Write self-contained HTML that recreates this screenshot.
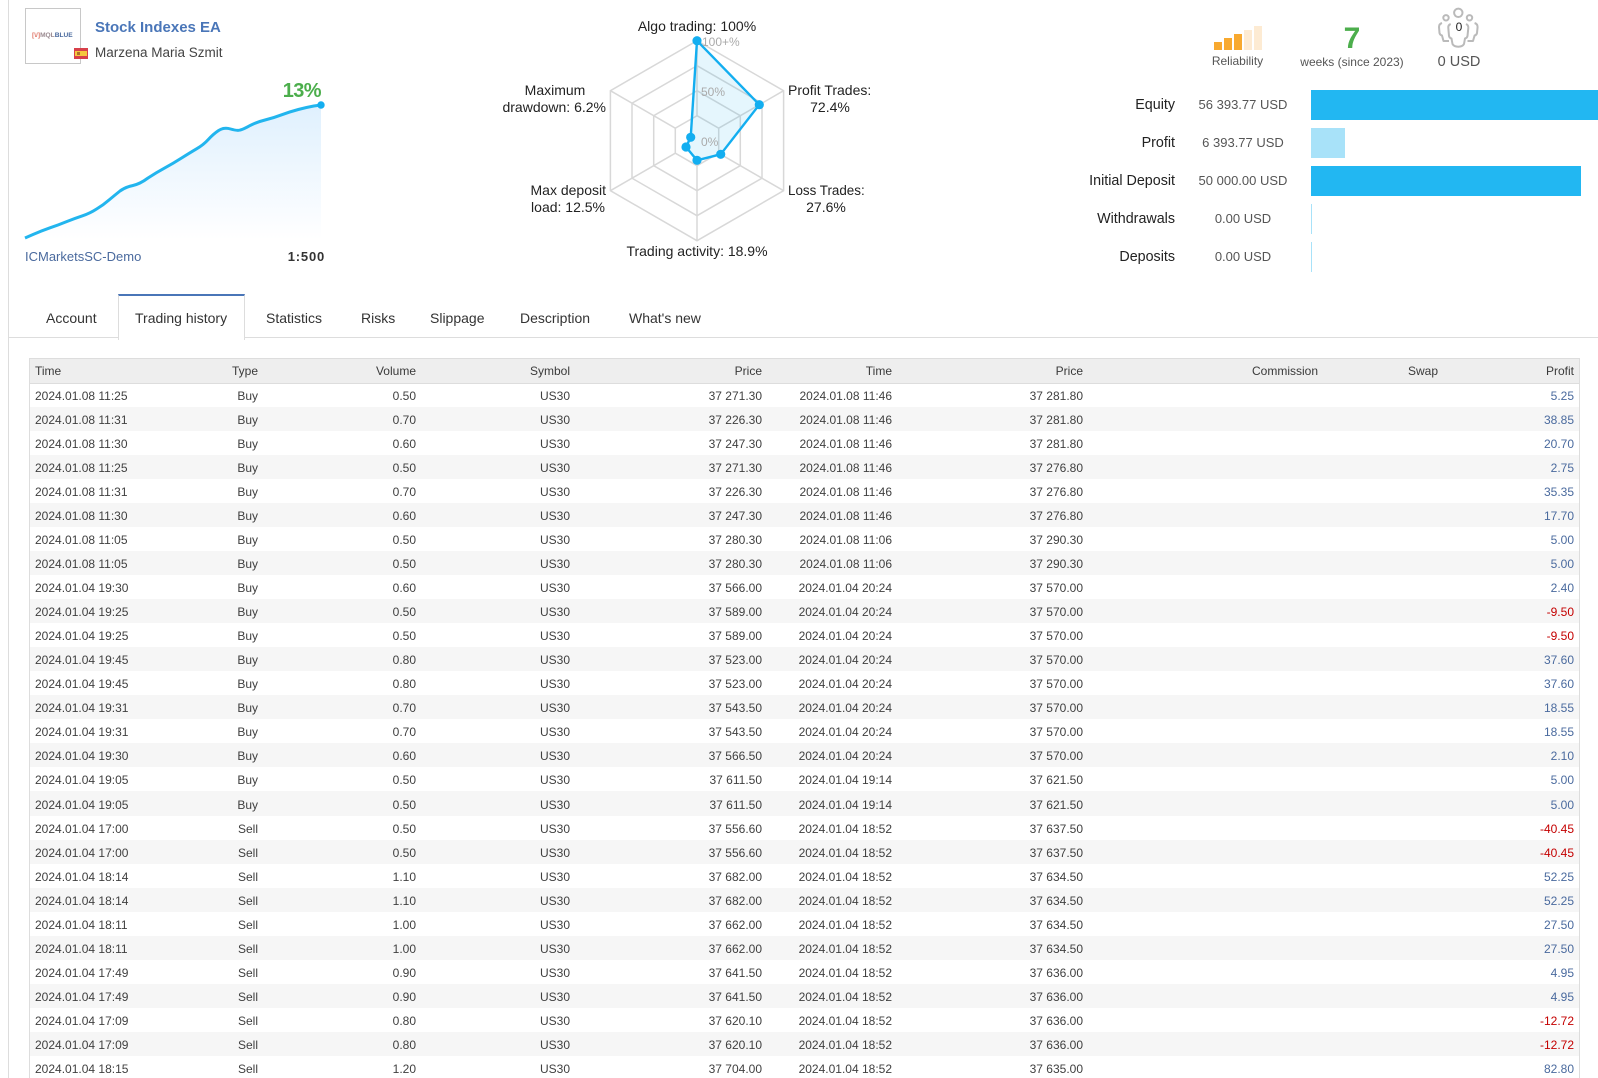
<!DOCTYPE html>
<html><head><meta charset="utf-8"><title>Stock Indexes EA</title>
<style>
html,body{margin:0;padding:0;background:#fff;width:1598px;height:1078px;overflow:hidden;font-family:"Liberation Sans",Arial,sans-serif;color:#444}
#left{position:absolute;left:8px;top:0;width:1px;height:1078px;background:#ddd}
svg{position:absolute;left:0;top:0}
.tabline{position:absolute;left:9px;right:0;top:337px;height:1px;background:#ddd}
.tab{position:absolute;top:297px;height:41px;line-height:42px;font-size:14px;color:#333;white-space:nowrap}
#active{position:absolute;left:118px;top:294px;width:125px;height:44px;background:#fff;border:1px solid #ddd;border-top:2px solid #4a76b8;border-bottom:0}
#tw{position:absolute;left:29px;top:358px;width:1551px;height:720px;overflow:hidden;border:1px solid #ddd;border-width:1px 1px 0 1px;box-sizing:border-box}
table{border-collapse:collapse;table-layout:fixed;width:1549px;font-size:12px;color:#3f3f3f}
th{background:#eee;height:24px;padding:0 5px;font-weight:normal;text-align:right;border-bottom:1px solid #ddd;color:#3a3a3a;box-sizing:border-box}
td{height:24px;padding:2px 5px 0;text-align:right;white-space:nowrap;box-sizing:border-box}
th:first-child,td:first-child{text-align:left}
tr:nth-child(even) td{background:#f6f6f6}
td:last-child{color:#4a6a9e}
td.n{color:#c40000}
tr.x td{height:25px}
</style></head><body>
<div id="left"></div>
<div class="tabline"></div>
<div id="active"></div>
<div class="tab" style="left:46px">Account</div>
<div class="tab" style="left:135px">Trading history</div>
<div class="tab" style="left:266px">Statistics</div>
<div class="tab" style="left:361px">Risks</div>
<div class="tab" style="left:430px">Slippage</div>
<div class="tab" style="left:520px">Description</div>
<div class="tab" style="left:629px">What's new</div>

<svg width="1598" height="290" viewBox="0 0 1598 290" font-family="Liberation Sans, Arial, sans-serif">
<defs><linearGradient id="g" x1="0" y1="0" x2="0" y2="1"><stop offset="0" stop-color="#dff0fe"/><stop offset="1" stop-color="#fff"/></linearGradient></defs>
<!-- logo -->
<rect x="25.5" y="8.5" width="55" height="55" fill="#fff" stroke="#c8c8c8"/>
<text x="32" y="37" font-size="6.6" font-weight="bold" fill="#e0786a">[\/]<tspan fill="#9a8a90">MQL</tspan><tspan fill="#4a6a9e">BLUE</tspan></text>
<rect x="74" y="48" width="14" height="11" fill="#d8404a"/><rect x="75" y="51" width="12" height="5" fill="#f6c83c"/><rect x="77" y="52" width="3" height="3" fill="#b0702a"/>
<text x="95" y="32" font-size="15" font-weight="bold" fill="#4a76b8">Stock Indexes EA</text>
<text x="95" y="57" font-size="13.5" fill="#444">Marzena Maria Szmit</text>
<!-- chart -->
<path d="M25 238L33 234.5Q41.7 230.7 50 227.8Q58.3 225 66.6 221.6Q75 218.3 82.5 215.8Q90 213.3 96.6 209Q103.3 205 109 200Q115 195 120 191Q125 187.3 132.5 185.6Q140 184 148 178Q156.7 172.3 165 167.8Q173.3 163.3 181.6 158Q190 152.7 196.6 148.8Q203.3 145 208.3 139.5Q213.3 134 218.6 130.5Q224 127 230.6 129Q237.3 131 240.3 130Q243.3 129.3 250 125.6Q256.7 122 265 120Q273.3 118 281.6 114.8Q290 111.7 298.3 109.5Q306.7 107.3 313.8 106L321 105L321 240L25 240Z" fill="url(#g)"/>
<path d="M25 238L33 234.5Q41.7 230.7 50 227.8Q58.3 225 66.6 221.6Q75 218.3 82.5 215.8Q90 213.3 96.6 209Q103.3 205 109 200Q115 195 120 191Q125 187.3 132.5 185.6Q140 184 148 178Q156.7 172.3 165 167.8Q173.3 163.3 181.6 158Q190 152.7 196.6 148.8Q203.3 145 208.3 139.5Q213.3 134 218.6 130.5Q224 127 230.6 129Q237.3 131 240.3 130Q243.3 129.3 250 125.6Q256.7 122 265 120Q273.3 118 281.6 114.8Q290 111.7 298.3 109.5Q306.7 107.3 313.8 106L321 105" fill="none" stroke="#22b5ee" stroke-width="3"/>
<circle cx="321" cy="105" r="3.7" fill="#13aef0"/>
<text x="321" y="97" text-anchor="end" font-size="20" font-weight="bold" letter-spacing="-.6" fill="#4cae4c">13%</text>
<text x="25" y="261" font-size="13" fill="#4a6a9e">ICMarketsSC-Demo</text>
<text x="325" y="261" text-anchor="end" font-size="13" font-weight="bold" letter-spacing=".8" fill="#333">1:500</text>
<!-- radar -->
<g fill="none" stroke="#d8d8d8" stroke-width="1.5">
<path d="M697 40.7L783.6 90.7V190.7L697 240.7L610.4 190.7V90.7Z"/>
<path d="M697 65.7L762 103.2V178.2L697 215.7L632 178.2V103.2Z"/>
<path d="M697 90.7L740.3 115.7V165.7L697 190.7L653.7 165.7V115.7Z"/>
<path d="M697 115.7L718.7 128.2V153.2L697 165.7L675.3 153.2V128.2Z"/>
<path d="M697 40.7V115.7M783.6 90.7L718.7 128.2M783.6 190.7L718.7 153.2M697 240.7V165.7M610.4 190.7L675.3 153.2M610.4 90.7L675.3 128.2"/>
</g>
<path d="M697 40.7L759.3 104.7L720.7 154.3L697 160.3L686 147L690.7 137.3Z" fill="#13aef0" fill-opacity=".11" stroke="#13aef0" stroke-width="2.4" stroke-linejoin="round"/>
<g fill="#13aef0"><circle cx="697" cy="40.7" r="4.6"/><circle cx="759.3" cy="104.7" r="4.6"/><circle cx="720.7" cy="154.3" r="4.6"/><circle cx="697" cy="160.3" r="4.6"/><circle cx="686" cy="147" r="4.6"/><circle cx="690.7" cy="137.3" r="4.6"/></g>
<g font-size="12" fill="#aaa"><text x="702" y="46">100+%</text><text x="701" y="96">50%</text><text x="701" y="146">0%</text></g>
<g font-size="14" fill="#222">
<text x="697" y="31" text-anchor="middle">Algo trading: 100%</text>
<text x="555" y="95" text-anchor="middle">Maximum</text>
<text x="606" y="112" text-anchor="end">drawdown: 6.2%</text>
<text x="788" y="95">Profit Trades:</text>
<text x="830" y="112" text-anchor="middle">72.4%</text>
<text x="606" y="195" text-anchor="end">Max deposit</text>
<text x="605" y="212" text-anchor="end">load: 12.5%</text>
<text x="788" y="195" font-size="13.4">Loss Trades:</text>
<text x="826" y="212" text-anchor="middle">27.6%</text>
<text x="697" y="256" text-anchor="middle">Trading activity: 18.9%</text>
</g>
<!-- reliability -->
<rect x="1214" y="42" width="8" height="8" fill="#f8a92f"/><rect x="1224" y="38" width="8" height="12" fill="#f8a92f"/><rect x="1234" y="34" width="8" height="16" fill="#f8a92f"/><rect x="1244" y="30" width="8" height="20" fill="#fdebd3"/><rect x="1254" y="26" width="8" height="24" fill="#fdebd3"/>
<text x="1237.5" y="65" text-anchor="middle" font-size="12" fill="#555">Reliability</text>
<text x="1352" y="48" text-anchor="middle" font-size="30" font-weight="bold" fill="#4cae4c">7</text>
<text x="1352" y="66" text-anchor="middle" font-size="12" fill="#555">weeks (since 2023)</text>
<!-- people -->
<g fill="none" stroke="#bababa" stroke-width="2" stroke-linejoin="round">
<circle cx="1458.3" cy="12.8" r="4.2"/><circle cx="1446" cy="17.8" r="2.7"/><circle cx="1469.5" cy="17.8" r="2.7"/>
<path d="M1450.7 24Q1448 25 1448.3 28L1449 36Q1449.5 38 1451.5 38.5L1452.5 44Q1454 46.7 1458.3 46.7Q1462.5 46.7 1464 44L1465 38.5Q1467 38 1467.5 36L1468.3 28Q1468.5 25 1466 24"/>
<path d="M1442 23Q1439 24 1439 27L1439.5 33Q1440 35 1442 35.5L1443.5 41H1449"/>
<path d="M1474.6 23Q1477.6 24 1477.6 27L1477 33Q1476.6 35 1474.6 35.5L1473 41H1467.5"/>
</g>
<text x="1459" y="31" text-anchor="middle" font-size="12" fill="#222">0</text>
<text x="1459" y="66" text-anchor="middle" font-size="14.5" fill="#555">0 USD</text>
<!-- bars -->
<rect x="1311" y="90" width="287" height="30" fill="#22b7f2"/>
<rect x="1311" y="128" width="34" height="30" fill="#a8e2f9"/>
<rect x="1311" y="166" width="270" height="30" fill="#22b7f2"/>
<rect x="1311" y="204" width="1" height="30" fill="#a8e2f9"/>
<rect x="1311" y="242" width="1" height="30" fill="#a8e2f9"/>
<g font-size="14.3" fill="#222" text-anchor="end">
<text x="1175" y="109">Equity</text><text x="1175" y="147">Profit</text><text x="1175" y="185">Initial Deposit</text><text x="1175" y="223">Withdrawals</text><text x="1175" y="261">Deposits</text></g>
<g font-size="13" fill="#555" text-anchor="middle">
<text x="1243" y="109">56 393.77 USD</text><text x="1243" y="147">6 393.77 USD</text><text x="1243" y="185">50 000.00 USD</text><text x="1243" y="223">0.00 USD</text><text x="1243" y="261">0.00 USD</text></g>
</svg>

<div id="tw"><table>
<colgroup><col style="width:133px"><col style="width:100px"><col style="width:158px"><col style="width:154px"><col style="width:192px"><col style="width:130px"><col style="width:191px"><col style="width:235px"><col style="width:120px"><col style="width:136px"></colgroup>
<thead><tr><th>Time</th><th>Type</th><th>Volume</th><th>Symbol</th><th>Price</th><th>Time</th><th>Price</th><th>Commission</th><th>Swap</th><th>Profit</th></tr></thead>
<tbody>
<tr><td>2024.01.08 11:25</td><td>Buy</td><td>0.50</td><td>US30</td><td>37 271.30</td><td>2024.01.08 11:46</td><td>37 281.80</td><td></td><td></td><td>5.25</td></tr>
<tr><td>2024.01.08 11:31</td><td>Buy</td><td>0.70</td><td>US30</td><td>37 226.30</td><td>2024.01.08 11:46</td><td>37 281.80</td><td></td><td></td><td>38.85</td></tr>
<tr><td>2024.01.08 11:30</td><td>Buy</td><td>0.60</td><td>US30</td><td>37 247.30</td><td>2024.01.08 11:46</td><td>37 281.80</td><td></td><td></td><td>20.70</td></tr>
<tr><td>2024.01.08 11:25</td><td>Buy</td><td>0.50</td><td>US30</td><td>37 271.30</td><td>2024.01.08 11:46</td><td>37 276.80</td><td></td><td></td><td>2.75</td></tr>
<tr><td>2024.01.08 11:31</td><td>Buy</td><td>0.70</td><td>US30</td><td>37 226.30</td><td>2024.01.08 11:46</td><td>37 276.80</td><td></td><td></td><td>35.35</td></tr>
<tr><td>2024.01.08 11:30</td><td>Buy</td><td>0.60</td><td>US30</td><td>37 247.30</td><td>2024.01.08 11:46</td><td>37 276.80</td><td></td><td></td><td>17.70</td></tr>
<tr><td>2024.01.08 11:05</td><td>Buy</td><td>0.50</td><td>US30</td><td>37 280.30</td><td>2024.01.08 11:06</td><td>37 290.30</td><td></td><td></td><td>5.00</td></tr>
<tr><td>2024.01.08 11:05</td><td>Buy</td><td>0.50</td><td>US30</td><td>37 280.30</td><td>2024.01.08 11:06</td><td>37 290.30</td><td></td><td></td><td>5.00</td></tr>
<tr><td>2024.01.04 19:30</td><td>Buy</td><td>0.60</td><td>US30</td><td>37 566.00</td><td>2024.01.04 20:24</td><td>37 570.00</td><td></td><td></td><td>2.40</td></tr>
<tr><td>2024.01.04 19:25</td><td>Buy</td><td>0.50</td><td>US30</td><td>37 589.00</td><td>2024.01.04 20:24</td><td>37 570.00</td><td></td><td></td><td class="n">-9.50</td></tr>
<tr><td>2024.01.04 19:25</td><td>Buy</td><td>0.50</td><td>US30</td><td>37 589.00</td><td>2024.01.04 20:24</td><td>37 570.00</td><td></td><td></td><td class="n">-9.50</td></tr>
<tr><td>2024.01.04 19:45</td><td>Buy</td><td>0.80</td><td>US30</td><td>37 523.00</td><td>2024.01.04 20:24</td><td>37 570.00</td><td></td><td></td><td>37.60</td></tr>
<tr><td>2024.01.04 19:45</td><td>Buy</td><td>0.80</td><td>US30</td><td>37 523.00</td><td>2024.01.04 20:24</td><td>37 570.00</td><td></td><td></td><td>37.60</td></tr>
<tr><td>2024.01.04 19:31</td><td>Buy</td><td>0.70</td><td>US30</td><td>37 543.50</td><td>2024.01.04 20:24</td><td>37 570.00</td><td></td><td></td><td>18.55</td></tr>
<tr><td>2024.01.04 19:31</td><td>Buy</td><td>0.70</td><td>US30</td><td>37 543.50</td><td>2024.01.04 20:24</td><td>37 570.00</td><td></td><td></td><td>18.55</td></tr>
<tr><td>2024.01.04 19:30</td><td>Buy</td><td>0.60</td><td>US30</td><td>37 566.50</td><td>2024.01.04 20:24</td><td>37 570.00</td><td></td><td></td><td>2.10</td></tr>
<tr><td>2024.01.04 19:05</td><td>Buy</td><td>0.50</td><td>US30</td><td>37 611.50</td><td>2024.01.04 19:14</td><td>37 621.50</td><td></td><td></td><td>5.00</td></tr>
<tr class="x"><td>2024.01.04 19:05</td><td>Buy</td><td>0.50</td><td>US30</td><td>37 611.50</td><td>2024.01.04 19:14</td><td>37 621.50</td><td></td><td></td><td>5.00</td></tr>
<tr><td>2024.01.04 17:00</td><td>Sell</td><td>0.50</td><td>US30</td><td>37 556.60</td><td>2024.01.04 18:52</td><td>37 637.50</td><td></td><td></td><td class="n">-40.45</td></tr>
<tr><td>2024.01.04 17:00</td><td>Sell</td><td>0.50</td><td>US30</td><td>37 556.60</td><td>2024.01.04 18:52</td><td>37 637.50</td><td></td><td></td><td class="n">-40.45</td></tr>
<tr><td>2024.01.04 18:14</td><td>Sell</td><td>1.10</td><td>US30</td><td>37 682.00</td><td>2024.01.04 18:52</td><td>37 634.50</td><td></td><td></td><td>52.25</td></tr>
<tr><td>2024.01.04 18:14</td><td>Sell</td><td>1.10</td><td>US30</td><td>37 682.00</td><td>2024.01.04 18:52</td><td>37 634.50</td><td></td><td></td><td>52.25</td></tr>
<tr><td>2024.01.04 18:11</td><td>Sell</td><td>1.00</td><td>US30</td><td>37 662.00</td><td>2024.01.04 18:52</td><td>37 634.50</td><td></td><td></td><td>27.50</td></tr>
<tr><td>2024.01.04 18:11</td><td>Sell</td><td>1.00</td><td>US30</td><td>37 662.00</td><td>2024.01.04 18:52</td><td>37 634.50</td><td></td><td></td><td>27.50</td></tr>
<tr><td>2024.01.04 17:49</td><td>Sell</td><td>0.90</td><td>US30</td><td>37 641.50</td><td>2024.01.04 18:52</td><td>37 636.00</td><td></td><td></td><td>4.95</td></tr>
<tr><td>2024.01.04 17:49</td><td>Sell</td><td>0.90</td><td>US30</td><td>37 641.50</td><td>2024.01.04 18:52</td><td>37 636.00</td><td></td><td></td><td>4.95</td></tr>
<tr><td>2024.01.04 17:09</td><td>Sell</td><td>0.80</td><td>US30</td><td>37 620.10</td><td>2024.01.04 18:52</td><td>37 636.00</td><td></td><td></td><td class="n">-12.72</td></tr>
<tr><td>2024.01.04 17:09</td><td>Sell</td><td>0.80</td><td>US30</td><td>37 620.10</td><td>2024.01.04 18:52</td><td>37 636.00</td><td></td><td></td><td class="n">-12.72</td></tr>
<tr><td>2024.01.04 18:15</td><td>Sell</td><td>1.20</td><td>US30</td><td>37 704.00</td><td>2024.01.04 18:52</td><td>37 635.00</td><td></td><td></td><td>82.80</td></tr>
</tbody></table></div>
</body></html>
